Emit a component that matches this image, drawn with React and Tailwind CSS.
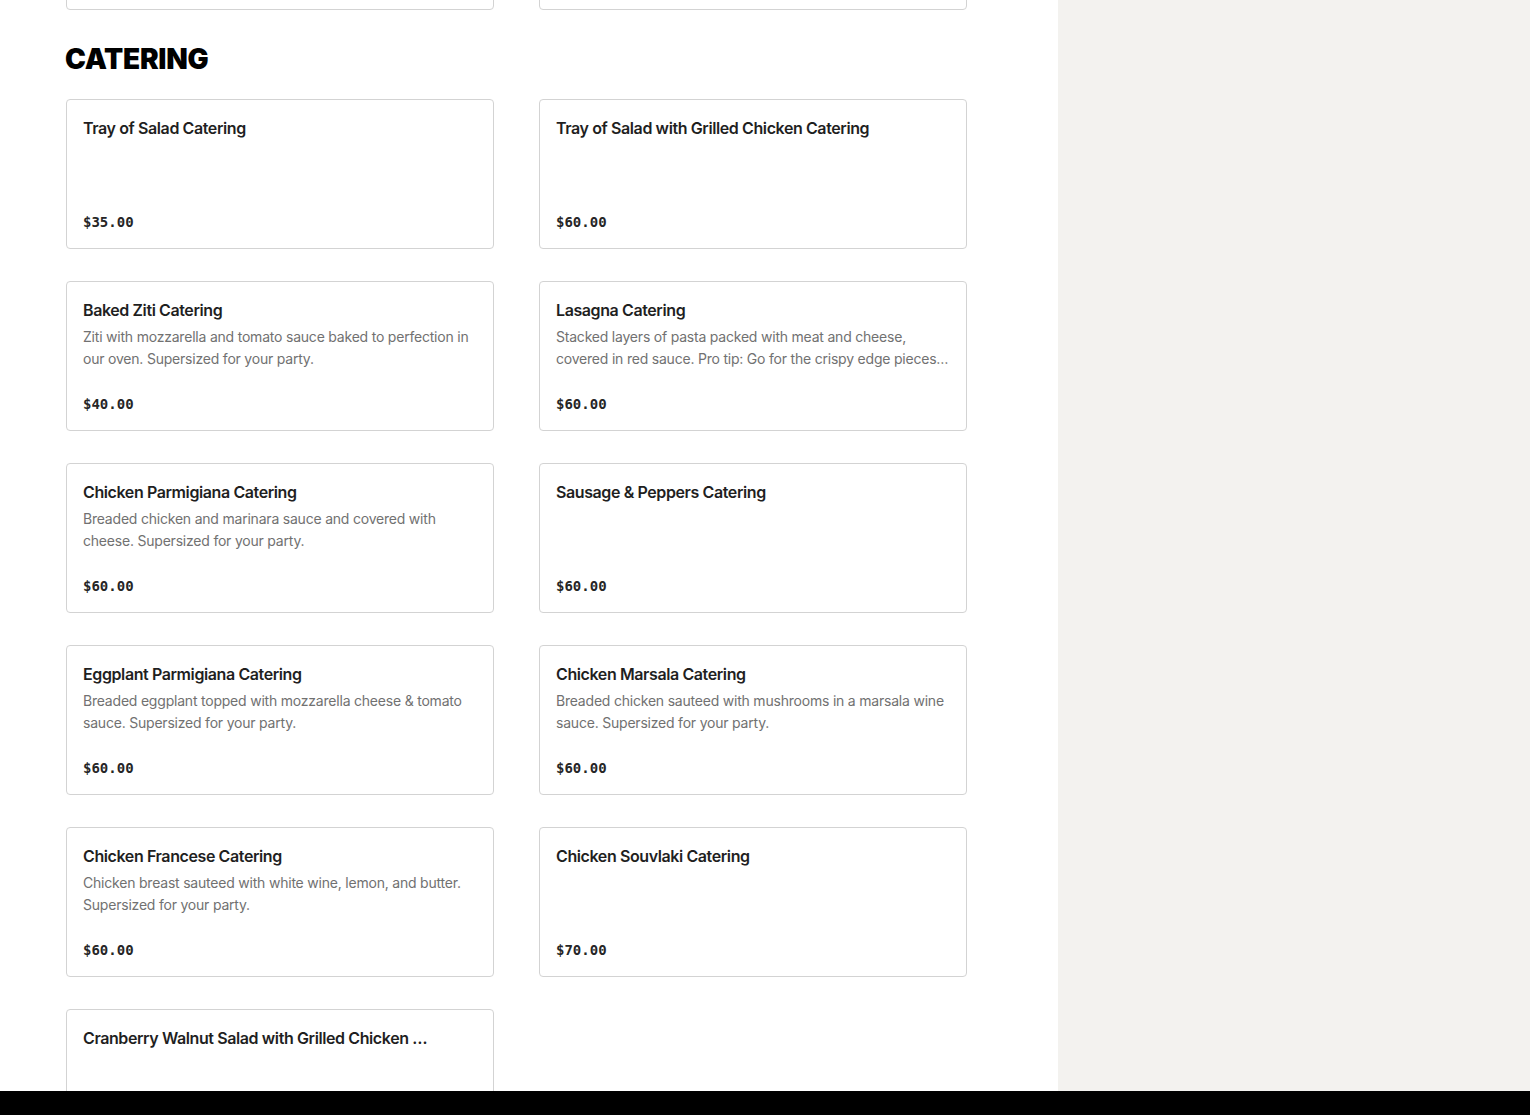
import React from 'react';

const items = [
    { name: 'Tray of Salad Catering', price: '$35.00' },
    { name: 'Tray of Salad with Grilled Chicken Catering', price: '$60.00' },
    {
        name: 'Baked Ziti Catering',
        desc: 'Ziti with mozzarella and tomato sauce baked to perfection in our oven. Supersized for your party.',
        price: '$40.00'
    },
    {
        name: 'Lasagna Catering',
        desc: 'Stacked layers of pasta packed with meat and cheese, covered in red sauce. Pro tip: Go for the crispy edge pieces. Supersized for your party.',
        price: '$60.00'
    },
    {
        name: 'Chicken Parmigiana Catering',
        desc: 'Breaded chicken and marinara sauce and covered with cheese. Supersized for your party.',
        price: '$60.00'
    },
    { name: 'Sausage & Peppers Catering', price: '$60.00' },
    {
        name: 'Eggplant Parmigiana Catering',
        desc: 'Breaded eggplant topped with mozzarella cheese & tomato sauce. Supersized for your party.',
        price: '$60.00'
    },
    {
        name: 'Chicken Marsala Catering',
        desc: 'Breaded chicken sauteed with mushrooms in a marsala wine sauce. Supersized for your party.',
        price: '$60.00'
    },
    {
        name: 'Chicken Francese Catering',
        desc: 'Chicken breast sauteed with white wine, lemon, and butter. Supersized for your party.',
        price: '$60.00'
    },
    { name: 'Chicken Souvlaki Catering', price: '$70.00' },
    { name: 'Cranberry Walnut Salad with Grilled Chicken Catering', price: '$60.00' }
];

const MenuCard = ({ item }) => (
    <div className="h-[150px] flex flex-col rounded-[4px] border border-[#d3d3d3] bg-white px-4 pt-4 pb-[17px]">
        <div className="truncate pr-[44px] text-[16px] leading-6 font-semibold tracking-[-0.025em] text-[#1f1f1f]">
            {item.name}
        </div>
        {item.desc && (
            <p className="mt-[4px] line-clamp-2 text-[14px] leading-[22px] tracking-[-0.015em] text-[#717171]">
                {item.desc}
            </p>
        )}
        <div className="mt-auto text-[14px] leading-[18px] font-bold text-[#262626] font-['DejaVu_Sans_Mono',monospace]">
            {item.price}
        </div>
    </div>
);

export default function App() {
    return (
        <div className="h-[1115px] flex flex-col overflow-hidden bg-white font-['Inter',sans-serif]">
            <div className="flex-1 flex overflow-hidden">
                {/* Menu column */}
                <main className="w-[1058px] shrink-0 pl-[66px]">
                    <div className="-mt-[140px] grid grid-cols-[428px_428px] gap-x-[45px]">
                        <div className="h-[150px] rounded-[4px] border border-[#d3d3d3]" />
                        <div className="h-[150px] rounded-[4px] border border-[#d3d3d3]" />
                    </div>

                    <h2 className="-ml-px mt-[32px] mb-[23px] text-[28px] leading-[34px] font-black tracking-[-0.01em] text-black">
                        CATERING
                    </h2>

                    <div className="grid grid-cols-[428px_428px] gap-x-[45px] gap-y-[32px]">
                        {items.map((item) => (
                            <MenuCard key={item.name} item={item} />
                        ))}
                    </div>
                </main>

                {/* Side panel */}
                <aside className="flex-1 bg-[#f3f2ef]" />
            </div>

            <div className="h-[24px] shrink-0 bg-black" />
        </div>
    );
}
